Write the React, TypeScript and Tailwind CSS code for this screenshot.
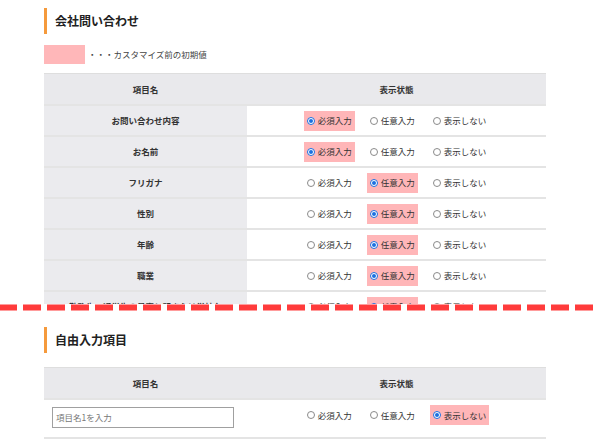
import React from "react";

const FONT = { fontFamily: '"Noto Sans CJK JP", "Noto Sans", sans-serif' };

type Opt = 0 | 1 | 2;
const LABELS = ["必須入力", "任意入力", "表示しない"];

function Radio({ checked }: { checked: boolean }) {
  return checked ? (
    <span className="w-[8px] h-[8px] rounded-full border border-[#1a6fe0] bg-white flex items-center justify-center shrink-0">
      <span className="w-[4px] h-[4px] rounded-full bg-[#1a6fe0]" />
    </span>
  ) : (
    <span className="w-[8px] h-[8px] rounded-full border border-[#8a8a8a] bg-white shrink-0" />
  );
}

function Options({ sel }: { sel: Opt }) {
  return (
    <div className="flex items-center gap-[12px]">
      {LABELS.map((l, i) => (
        <div
          key={l}
          className={
            "h-[20px] pl-[3px] pr-[3px] flex items-center gap-[3px] " +
            (i === sel ? "bg-[#ffb6b8]" : "")
          }
        >
          <Radio checked={i === sel} />
          <span className="text-[8.5px] text-[#333] leading-none">{l}</span>
        </div>
      ))}
    </div>
  );
}

function Heading({ children }: { children: React.ReactNode }) {
  return (
    <div className="h-[26px] border-l-[3px] border-[#f59a3c] pl-[8px] flex items-center">
      <span className="text-[12px] font-bold text-[#222] leading-none">{children}</span>
    </div>
  );
}

function HeaderRow() {
  return (
    <div className="flex h-[31px] bg-[#e9e9ec] border-t border-[#dedede]">
      <div className="w-[203px] flex items-center justify-center text-[8.5px] font-bold text-[#333]">項目名</div>
      <div className="flex-1 flex items-center justify-center text-[8.5px] font-bold text-[#333]">表示状態</div>
    </div>
  );
}

const ROWS: [string, Opt][] = [
  ["お問い合わせ内容", 0],
  ["お名前", 0],
  ["フリガナ", 1],
  ["性別", 1],
  ["年齢", 1],
  ["職業", 1],
  ["勤務先・通学生の最寄り駅または学校名", 1],
];

export default function App() {
  return (
    <div className="w-[596px] h-[442px] bg-white overflow-hidden" style={FONT}>
      <div className="h-[304px] overflow-hidden px-[44px] w-[596px]">
        <div className="w-[502px] pt-[8px]">
          <Heading>会社問い合わせ</Heading>
          <div className="mt-[11px] flex items-center">
            <div className="w-[41px] h-[19px] bg-[#ffb7b9]" />
            <span className="ml-[3px] text-[8.5px] text-[#444]">・・・カスタマイズ前の初期値</span>
          </div>
          <div className="mt-[9px]">
            <HeaderRow />
            {ROWS.map(([name, sel]) => (
              <div key={name} className="flex h-[31px] border-t-2 border-[#e4e4e4]">
                <div className="w-[203px] bg-[#ebebee] flex items-center justify-center text-[8.5px] font-bold text-[#333]">
                  {name}
                </div>
                <div className="flex-1 flex items-center justify-center">
                  <Options sel={sel} />
                </div>
              </div>
            ))}
          </div>
        </div>
      </div>
      <div className="h-[7px] w-[596px]">
        <svg width="596" height="7" className="block">
          <line x1="0" y1="3.5" x2="596" y2="3.5" stroke="#ff3b3b" strokeWidth="6" strokeDasharray="18 6" strokeDashoffset="1" />
        </svg>
      </div>
      <div className="px-[44px] pt-[16px]">
        <div className="w-[502px]">
          <Heading>自由入力項目</Heading>
          <div className="mt-[14px]">
            <HeaderRow />
            <div className="flex h-[41px] border-t-2 border-b-2 border-[#e4e4e4]">
              <div className="w-[203px] pl-[8px] pt-[7px]">
                <div className="w-[182px] h-[21px] border border-[#a0a0a0] flex items-center pl-[3px] text-[8.5px] text-[#777]">
                  項目名1を入力
                </div>
              </div>
              <div className="flex-1 flex items-start justify-center pt-[5px]">
                <Options sel={2} />
              </div>
            </div>
          </div>
        </div>
      </div>
    </div>
  );
}
